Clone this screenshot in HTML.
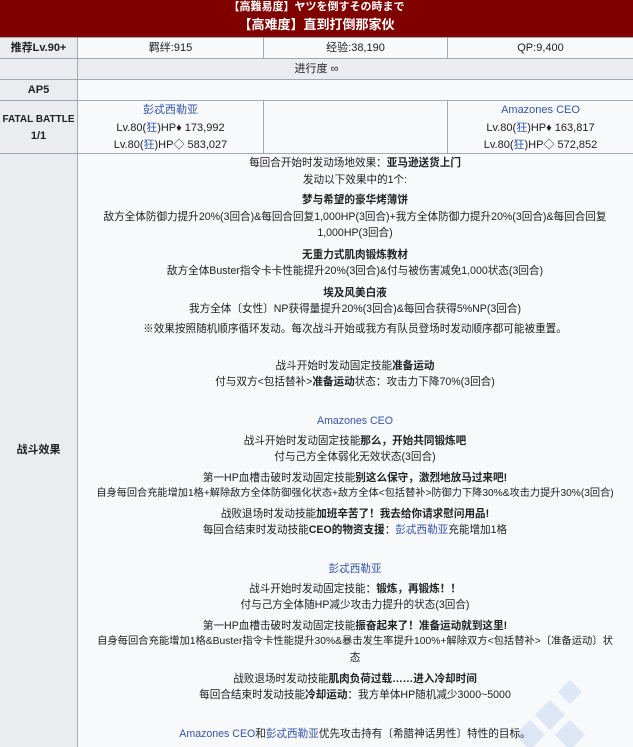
<!DOCTYPE html>
<html><head><meta charset="utf-8"><style>
body{margin:0;width:633px;height:747px;overflow:hidden;background:#f8f9fa;font-family:"Liberation Sans","Noto Sans CJK SC",sans-serif;font-size:11px;color:#202122;position:relative}
.a{position:absolute}
.hd{left:0;top:0;width:633px;height:37px;background:#800000;color:#fff;text-align:center;font-weight:bold}
.c{position:absolute;text-align:center;line-height:16px;white-space:nowrap}
.ln{position:absolute;left:77px;width:556px;text-align:center;line-height:16px;white-space:nowrap;font-size:10.6px}
.g{background:#eaecf0}
.b{font-weight:bold}
.bl{color:#3355aa}
.hl{position:absolute;height:1px;background:#a2a9b1}
.vl{position:absolute;width:1px;background:#a2a9b1}
</style></head><body>
<div class="a hd"><div style="font-size:11px;line-height:13px;padding-top:1px">【高難易度】ヤツを倒すその時まで</div><div style="font-size:13px;line-height:20px;padding-top:1px">【高难度】直到打倒那家伙</div></div>
<div class="a g" style="left:0;top:37px;width:77px;height:116px"></div>
<div class="a g" style="left:0;top:58px;width:633px;height:21px"></div>
<div class="a g" style="left:0;top:153px;width:77px;height:594px"></div>
<div class="hl" style="left:0;top:37px;width:633px"></div>
<div class="hl" style="left:0;top:58px;width:633px"></div>
<div class="hl" style="left:0;top:79px;width:633px"></div>
<div class="hl" style="left:0;top:100px;width:633px"></div>
<div class="hl" style="left:0;top:153px;width:633px"></div>
<div class="vl" style="left:77px;top:37px;height:710px"></div>
<div class="vl" style="left:263px;top:37px;height:21px"></div>
<div class="vl" style="left:447px;top:37px;height:21px"></div>
<div class="vl" style="left:263px;top:100px;height:53px"></div>
<div class="vl" style="left:447px;top:100px;height:53px"></div>
<div class="c b" style="left:0;width:77px;top:40px">推荐Lv.90+</div>
<div class="c" style="left:78px;width:185px;top:40px">羁绊:915</div>
<div class="c" style="left:264px;width:183px;top:40px">经验:38,190</div>
<div class="c" style="left:448px;width:185px;top:40px">QP:9,400</div>
<div class="c" style="left:0;width:633px;top:61px">进行度 ∞</div>
<div class="c b" style="left:0;width:77px;top:82px">AP5</div>
<div class="c b" style="left:0;width:77px;top:111px;font-size:10px;line-height:17px">FATAL BATTLE<br><span style="font-size:11px">1/1</span></div>
<div class="c" style="left:78px;width:185px;top:102px;line-height:17.5px"><span class="bl">彭忒西勒亚</span><br>Lv.80(<span class="bl">狂</span>)HP♦ 173,992<br>Lv.80(<span class="bl">狂</span>)HP◇ 583,027</div>
<div class="c" style="left:448px;width:185px;top:102px;line-height:17.5px"><span class="bl">Amazones CEO</span><br>Lv.80(<span class="bl">狂</span>)HP♦ 163,817<br>Lv.80(<span class="bl">狂</span>)HP◇ 572,852</div>
<div class="c b" style="left:0;width:77px;top:442px">战斗效果</div>
<svg class="a" style="left:500px;top:680px" width="133" height="67"><g fill="#dde6f5"><path d="M50 20l15 15-15 15-15-15z"/><path d="M70 40l15 15-15 15-15-15z"/><path d="M30 40l15 15-15 15-15-15z"/><path d="M70 0l12 12-12 12-12-12z"/></g></svg>
<div class="ln" style="top:155px">每回合开始时发动场地效果：<b>亚马逊送货上门</b></div>
<div class="ln" style="top:172px">发动以下效果中的1个:</div>
<div class="ln b" style="top:192px">梦与希望的豪华烤薄饼</div>
<div class="ln" style="top:209px">敌方全体防御力提升20%(3回合)&amp;每回合回复1,000HP(3回合)+我方全体防御力提升20%(3回合)&amp;每回合回复</div>
<div class="ln" style="top:225px">1,000HP(3回合)</div>
<div class="ln b" style="top:247px">无重力式肌肉锻炼教材</div>
<div class="ln" style="top:263px">敌方全体Buster指令卡卡性能提升20%(3回合)&amp;付与被伤害减免1,000状态(3回合)</div>
<div class="ln b" style="top:285px">埃及风美白液</div>
<div class="ln" style="top:301px">我方全体〔女性〕NP获得量提升20%(3回合)&amp;每回合获得5%NP(3回合)</div>
<div class="ln" style="top:321px">※效果按照随机顺序循环发动。每次战斗开始或我方有队员登场时发动顺序都可能被重置。</div>
<div class="ln" style="top:358px">战斗开始时发动固定技能<b>准备运动</b></div>
<div class="ln" style="top:374px">付与双方&lt;包括替补&gt;<b>准备运动</b>状态：攻击力下降70%(3回合)</div>
<div class="ln bl" style="top:413px">Amazones CEO</div>
<div class="ln" style="top:433px">战斗开始时发动固定技能<b>那么，开始共同锻炼吧</b></div>
<div class="ln" style="top:449px">付与己方全体弱化无效状态(3回合)</div>
<div class="ln" style="top:470px">第一HP血槽击破时发动固定技能<b>别这么保守，激烈地放马过来吧!</b></div>
<div class="ln" style="top:486px;font-size:10.2px">自身每回合充能增加1格+解除敌方全体防御强化状态+敌方全体&lt;包括替补&gt;防御力下降30%&amp;攻击力提升30%(3回合)</div>
<div class="ln" style="top:506px">战败退场时发动技能<b>加班辛苦了！我去给你请求慰问用品!</b></div>
<div class="ln" style="top:522px">每回合结束时发动技能<b>CEO的物资支援</b>：<span class="bl">彭忒西勒亚</span>充能增加1格</div>
<div class="ln bl" style="top:561px">彭忒西勒亚</div>
<div class="ln" style="top:581px">战斗开始时发动固定技能：<b>锻炼，再锻炼！！</b></div>
<div class="ln" style="top:597px">付与己方全体随HP减少攻击力提升的状态(3回合)</div>
<div class="ln" style="top:618px">第一HP血槽击破时发动固定技能<b>振奋起来了！准备运动就到这里!</b></div>
<div class="ln" style="top:634px;font-size:10.3px">自身每回合充能增加1格&amp;Buster指令卡性能提升30%&amp;暴击发生率提升100%+解除双方&lt;包括替补&gt;〔准备运动〕状</div>
<div class="ln" style="top:650px">态</div>
<div class="ln" style="top:671px">战败退场时发动技能<b>肌肉负荷过载……进入冷却时间</b></div>
<div class="ln" style="top:687px">每回合结束时发动技能<b>冷却运动</b>：我方单体HP随机减少3000~5000</div>
<div class="ln" style="top:726px"><span class="bl">Amazones CEO</span>和<span class="bl">彭忒西勒亚</span>优先攻击持有〔希腊神话男性〕特性的目标。</div>
</body></html>
